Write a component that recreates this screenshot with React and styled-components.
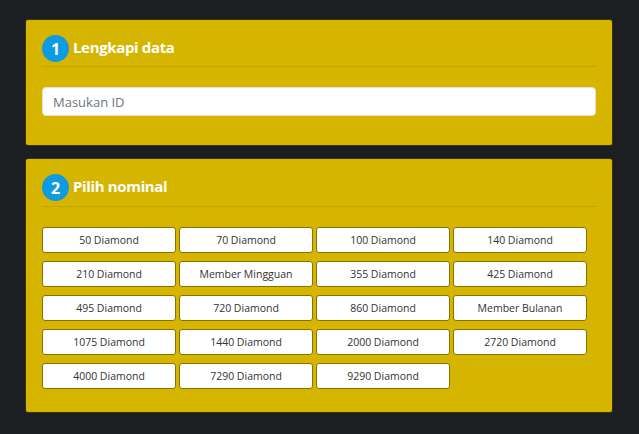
import React from "react"
import styled, { createGlobalStyle } from "styled-components"

const GlobalStyle = createGlobalStyle`
    html, body {
        margin: 0;
        padding: 0;
        background: #1c1e22;
        font-family: "Open Sans", "Liberation Sans", sans-serif;
    }
`

const Page = styled.div`
    padding: 19px 26px 0 25px;
    display: flex;
    flex-direction: column;
    gap: 12px;
`
const Card = styled.section`
    background: #d6b500;
    border: 1px solid #3a3310;
    border-radius: 3px;
    padding: 15px 16px ${props => props.bottom}px 16px;
`
const Header = styled.div`
    display: flex;
    align-items: center;
    gap: 4px;
    padding-bottom: ${props => props.pad}px;
    border-bottom: 1px solid #c4a600;
`
const Badge = styled.span`
    width: 27px;
    height: 27px;
    border-radius: 50%;
    background: #0f9be2;
    color: #fff;
    font-weight: 700;
    font-size: 16px;
    display: flex;
    align-items: center;
    justify-content: center;
`
const Title = styled.h2`
    margin: 0 0 4px 0;
    color: #fff;
    font-size: 15px;
    font-weight: 700;
    letter-spacing: -0.35px;
`
const Body = styled.div`
    margin-top: ${props => props.top}px;
`
const Input = styled.input`
    box-sizing: border-box;
    width: 100%;
    height: 29px;
    border: 1px solid #e8e2c8;
    border-radius: 4px;
    background: #fff;
    padding: 0 10px;
    font-family: inherit;
    font-size: 13px;
    color: #333;
    outline: none;
    &::placeholder {
        color: #6c757d;
    }
`
const Grid = styled.div`
    display: grid;
    grid-template-columns: repeat(4, 134px);
    column-gap: 3px;
    row-gap: 8px;
`
const Option = styled.button`
    box-sizing: border-box;
    height: 26px;
    background: #fff;
    border: 1.5px solid #8a7200;
    border-radius: 3px;
    font-family: inherit;
    font-size: 10.5px;
    color: #333;
    cursor: pointer;
    padding: 0;
`

const nominals = [
    "50 Diamond", "70 Diamond", "100 Diamond", "140 Diamond",
    "210 Diamond", "Member Mingguan", "355 Diamond", "425 Diamond",
    "495 Diamond", "720 Diamond", "860 Diamond", "Member Bulanan",
    "1075 Diamond", "1440 Diamond", "2000 Diamond", "2720 Diamond",
    "4000 Diamond", "7290 Diamond", "9290 Diamond"
]

export default function App() {
    return (
        <Page>
            <GlobalStyle />
            <Card bottom={29}>
                <Header pad={4}>
                    <Badge>1</Badge>
                    <Title>Lengkapi data</Title>
                </Header>
                <Body top={20}>
                    <Input placeholder="Masukan ID" />
                </Body>
            </Card>
            <Card bottom={23}>
                <Header pad={5}>
                    <Badge>2</Badge>
                    <Title>Pilih nominal</Title>
                </Header>
                <Body top={20}>
                    <Grid>
                        {nominals.map((n) => (
                            <Option key={n}>{n}</Option>
                        ))}
                    </Grid>
                </Body>
            </Card>
        </Page>
    )
}
